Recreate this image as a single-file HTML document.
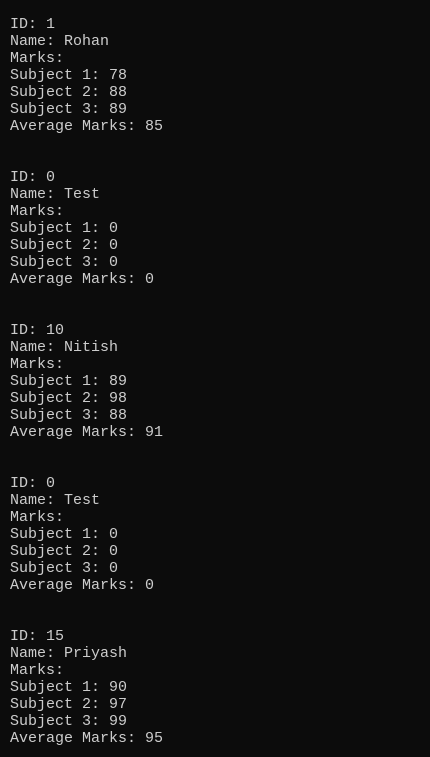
<!DOCTYPE html>
<html><head><meta charset="utf-8"><style>
html,body{margin:0;padding:0;background:#0c0c0c;width:430px;height:757px;overflow:hidden}
pre{margin:0;padding:16px 0 0 10px;font-family:"Liberation Mono","DejaVu Sans Mono",monospace;font-size:15px;line-height:17px;color:#cccccc}
</style></head><body><pre>ID: 1
Name: Rohan
Marks:
Subject 1: 78
Subject 2: 88
Subject 3: 89
Average Marks: 85


ID: 0
Name: Test
Marks:
Subject 1: 0
Subject 2: 0
Subject 3: 0
Average Marks: 0


ID: 10
Name: Nitish
Marks:
Subject 1: 89
Subject 2: 98
Subject 3: 88
Average Marks: 91


ID: 0
Name: Test
Marks:
Subject 1: 0
Subject 2: 0
Subject 3: 0
Average Marks: 0


ID: 15
Name: Priyash
Marks:
Subject 1: 90
Subject 2: 97
Subject 3: 99
Average Marks: 95</pre></body></html>
